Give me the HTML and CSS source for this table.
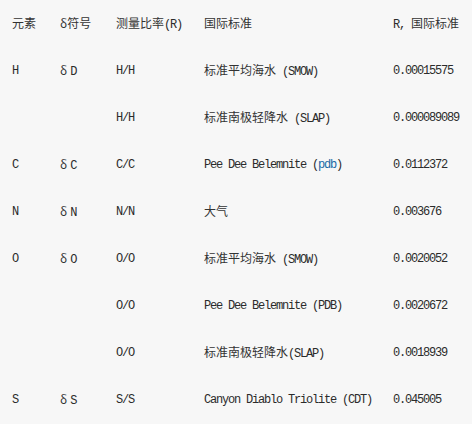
FILE: index.html
```html
<!DOCTYPE html>
<html>
<head>
<meta charset="utf-8">
<link rel="stylesheet" href="styles.css">
</head>
<body>
<table class="iso">
  <colgroup>
    <col class="c1"><col class="c2"><col class="c3"><col class="c4"><col class="c5">
  </colgroup>
  <tr>
    <td><span class="zh">元素</span></td>
    <td><span class="zh">δ符号</span></td>
    <td><span class="zh">测量比率</span>(R)</td>
    <td><span class="zh">国际标准</span></td>
    <td>R, <span class="zh">国际标准</span></td>
  </tr>
  <tr>
    <td>H</td>
    <td><span class="zh delta">δ</span>D</td>
    <td>H/H</td>
    <td><span class="zh">标准平均海水</span> (SMOW)</td>
    <td>0.00015575</td>
  </tr>
  <tr>
    <td></td>
    <td></td>
    <td>H/H</td>
    <td><span class="zh">标准南极轻降水</span> (SLAP)</td>
    <td>0.000089089</td>
  </tr>
  <tr>
    <td>C</td>
    <td><span class="zh delta">δ</span>C</td>
    <td>C/C</td>
    <td>Pee Dee Belemnite (<span class="link">pdb</span>)</td>
    <td>0.0112372</td>
  </tr>
  <tr>
    <td>N</td>
    <td><span class="zh delta">δ</span>N</td>
    <td>N/N</td>
    <td><span class="zh">大气</span></td>
    <td>0.003676</td>
  </tr>
  <tr>
    <td>O</td>
    <td><span class="zh delta">δ</span>O</td>
    <td>O/O</td>
    <td><span class="zh">标准平均海水</span> (SMOW)</td>
    <td>0.0020052</td>
  </tr>
  <tr>
    <td></td>
    <td></td>
    <td>O/O</td>
    <td>Pee Dee Belemnite (PDB)</td>
    <td>0.0020672</td>
  </tr>
  <tr>
    <td></td>
    <td></td>
    <td>O/O</td>
    <td><span class="zh">标准南极轻降水</span>(SLAP)</td>
    <td>0.0018939</td>
  </tr>
  <tr>
    <td>S</td>
    <td><span class="zh delta">δ</span>S</td>
    <td>S/S</td>
    <td>Canyon Diablo Triolite (CDT)</td>
    <td>0.045005</td>
  </tr>
</table>
</body>
</html>
```

FILE: styles.css
```css
html, body {
  margin: 0;
  padding: 0;
  background: #f7f7f7;
}

.iso {
  width: 472px;
  border-collapse: collapse;
  table-layout: fixed;
  color: #2b2b2b;
  font-family: "Liberation Mono", "Noto Sans CJK SC", monospace;
  font-size: 12px;
  letter-spacing: -1.2px;
}

.c1 { width: 48px; }
.c2 { width: 56px; }
.c3 { width: 88px; }
.c4 { width: 189px; }
.c5 { width: 91px; }

.iso td {
  height: 47px;
  padding: 0 0 0 12px;
  vertical-align: middle;
  white-space: nowrap;
  line-height: 14px;
}

.zh {
  font-family: "Noto Sans CJK SC", sans-serif;
  font-size: 12px;
  letter-spacing: 0;
  color: #333;
}

.delta {
  margin-right: 3px;
}

.link {
  color: #1a6aa6;
}
```
